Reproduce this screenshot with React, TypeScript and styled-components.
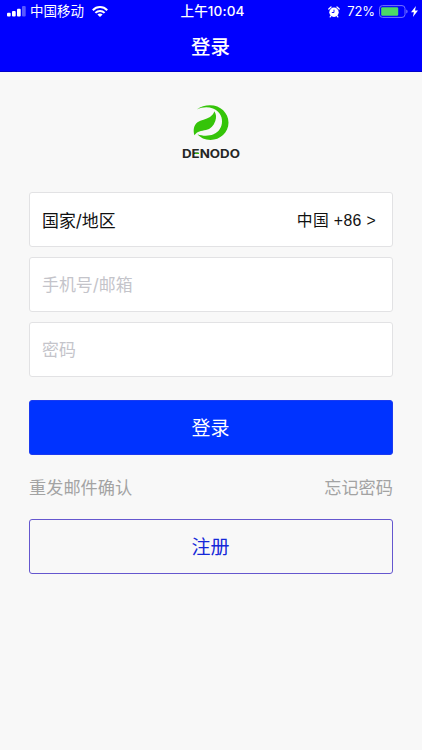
import React from 'react';
import styled, { createGlobalStyle } from 'styled-components';

const GlobalStyle = createGlobalStyle`
  *, *::before, *::after { box-sizing: border-box; }
  body {
    margin: 0;
    background: #f8f8f8;
    font-family: Inter, "Noto Sans CJK SC", sans-serif;
  }
  button, input { font-family: inherit; }
`;

const Screen = styled.div`
  display: flex;
  flex-direction: column;
  height: 750px;
  background: #f8f8f8;
`;

const Header = styled.header`
  height: 72px;
  background: #0000ff;
  border-bottom: 1px solid #0000c8;
  color: #fff;
`;

const StatusBar = styled.div`
  display: grid;
  grid-template-columns: 1fr auto 1fr;
  align-items: center;
  height: 23px;
  padding: 0 4px 0 7px;
  font-size: 13.2px;
  line-height: 23px;
`;

const StatusGroup = styled.div<{ $end?: boolean }>`
  display: flex;
  align-items: center;
  justify-content: ${(p) => (p.$end ? 'flex-end' : 'flex-start')};
`;

const Carrier = styled.span`
  margin: 0 8px 0 4px;
  font-size: 13.5px;
`;

const Clock = styled.span`
  display: flex;
  font-weight: 500;
  font-size: 13.6px;
  letter-spacing: 0.1px;
`;

const Percent = styled.span`
  margin: 0 4px 0 7px;
  font-size: 13px;
  letter-spacing: -0.1px;
`;

const Title = styled.h1`
  margin: 0;
  padding-top: 4px;
  font-size: 19.5px;
  font-weight: 500;
  line-height: 40px;
  text-align: center;
  text-indent: -1px;
`;

const Content = styled.main`
  display: flex;
  flex-direction: column;
  padding: 33px 29px 0;
`;

const Brand = styled.div`
  display: flex;
  justify-content: center;
  height: 87px;
`;

const Fields = styled.div`
  display: flex;
  flex-direction: column;
  gap: 10px;
`;

const fieldHeight = '55px';

const RegionRow = styled.div`
  display: flex;
  align-items: center;
  justify-content: space-between;
  height: ${fieldHeight};
  padding: 0 16px 0 12px;
  border: 1px solid #e2e2e4;
  border-radius: 3px;
  background: #fff;
  color: #111;
  font-size: 16.9px;
`;

const RegionValue = styled.span`
  font-family: "Liberation Sans", "Noto Sans CJK SC", sans-serif;
  font-size: 15.8px;
  letter-spacing: 0.35px;
`;

const TextField = styled.input`
  width: 100%;
  height: ${fieldHeight};
  padding: 1px 12px 0;
  border: 1px solid #e2e2e4;
  border-radius: 3px;
  outline: none;
  background: #fff;
  font-size: 16.9px;
  &::placeholder { color: #c4c4ca; opacity: 1; }
`;

const ActionButton = styled.button<{ $primary?: boolean }>`
  height: 55px;
  padding: 0 1px 2px 0;
  border: 1px solid ${(p) => (p.$primary ? '#1b3af0' : '#6557cf')};
  border-radius: 3px;
  background: ${(p) => (p.$primary ? '#0033ff' : 'transparent')};
  color: ${(p) => (p.$primary ? '#fff' : '#1528d8')};
  font-size: 19px;
  margin-top: ${(p) => (p.$primary ? '23px' : '0')};
`;

const Links = styled.nav`
  display: flex;
  justify-content: space-between;
  align-items: center;
  height: 64px;
  padding-bottom: 2px;
  color: #a3a3a3;
  font-size: 17.2px;
`;

const Signal = () => (
  <svg width="19" height="11" viewBox="0 0 19 11" fill="#fff">
    <rect x="0" y="6.8" width="3.7" height="3.7" rx="1" />
    <rect x="5" y="5" width="3.7" height="5.5" rx="1" />
    <rect x="10" y="2.7" width="3.7" height="7.8" rx="1" />
    <rect x="15" y="0" width="3.7" height="10.5" rx="1" opacity=".35" />
  </svg>
);

const Wifi = () => (
  <svg width="16" height="11" viewBox="0 0 16 11" fill="none" stroke="#fff" strokeWidth="2">
    <path d="M.8 4.2C4.8 0 11.2 0 15.2 4.2" />
    <path d="M3.4 6.9c2.6-2.7 6.6-2.7 9.2 0" />
    <path d="M8 11 5.4 8.6c1.5-1.4 3.7-1.4 5.2 0Z" fill="#fff" stroke="none" />
  </svg>
);

const Alarm = () => (
  <svg width="12" height="12" viewBox="0 0 12 12">
    <circle cx="6" cy="6.3" r="4.7" fill="#fff" />
    <path d="M.8 3 3 1M11.2 3 9 1M2.8 10l-.6.9M9.2 10l.6.9" stroke="#fff" strokeWidth="1.3" strokeLinecap="round" />
    <path d="M6 3.700V6.500H3.800" fill="none" stroke="#00f" strokeWidth=".9" />
  </svg>
);

const Battery = () => (
  <svg width="32" height="13" viewBox="0 0 32 13">
    <rect x=".5" y=".6" width="25.5" height="11.8" rx="3" fill="none" stroke="#7373ff" />
    <rect x="2.2" y="2.3" width="17" height="8.4" rx="1.2" fill="#4cd964" />
    <path d="M27.3 4.4c1.7.7 1.7 3.5 0 4.2Z" fill="#8080ff" />
  </svg>
);

const Bolt = () => (
  <svg width="7" height="11" viewBox="0 0 7 11" fill="#fff">
    <path d="M4.9 0 0 6.200h2.900L1.900 11 7 4.600H4Z" />
  </svg>
);

const Logo = () => (
  <svg width="60" height="56" viewBox="0 0 60 56" role="img" aria-label="DENODO">
    <path
      d="M15.700 4.500C20 1.300 24 .3 29 .3C39.500 .3 47.500 8 47.500 17.700C47.500 27.500 39 34.900 29.500 34.900C24 34.900 19.300 32.700 16.500 29.200C21 31 27.500 31.400 32.500 29.300C38 27 41 22 41 16.500C41 10.500 38 6 32 3.500C26.500 1.300 21 2 15.700 4.500Z"
      fill="#35c409"
    />
    <path
      d="M33.300 6.300C35.300 9 35.600 12.500 34.300 16C32.500 21 29.500 24 25 25C20 26 16.500 26 13.400 30.300C12 25.500 12.500 20.500 16.500 17.300C20 14.500 25 14.500 29 11.900C31.500 10.200 32.800 8.500 33.300 6.300Z"
      fill="#35c409"
    />
    <text
      x="1"
      y="52.500"
      textLength="58"
      lengthAdjust="spacingAndGlyphs"
      fill="#252725"
      fontFamily="Inter, sans-serif"
      fontSize="11.500"
      fontWeight="700"
    >
      DENODO
    </text>
    <path d="M14 48.400h4" stroke="#35bd09" strokeWidth="1.200" />
  </svg>
);

export default function App() {
  return (
    <Screen>
      <GlobalStyle />
      <Header>
        <StatusBar>
          <StatusGroup>
            <Signal />
            <Carrier>中国移动</Carrier>
            <Wifi />
          </StatusGroup>
          <Clock>上午10:04</Clock>
          <StatusGroup $end>
            <Alarm />
            <Percent>72%</Percent>
            <Battery />
            <Bolt />
          </StatusGroup>
        </StatusBar>
        <Title>登录</Title>
      </Header>
      <Content>
        <Brand>
          <Logo />
        </Brand>
        <Fields>
          <RegionRow>
            <span>国家/地区</span>
            <RegionValue>中国 +86 &gt;</RegionValue>
          </RegionRow>
          <TextField placeholder="手机号/邮箱" />
          <TextField type="password" placeholder="密码" />
        </Fields>
        <ActionButton $primary>登录</ActionButton>
        <Links>
          <span>重发邮件确认</span>
          <span>忘记密码</span>
        </Links>
        <ActionButton>注册</ActionButton>
      </Content>
    </Screen>
  );
}
